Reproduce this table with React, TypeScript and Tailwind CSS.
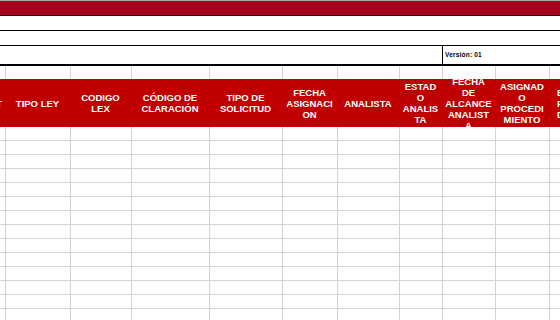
const cols = [
  { w: "w-[5px]", lines: ["NIT"] },
  { w: "w-[65px]", lines: ["TIPO LEY"] },
  { w: "w-[61px]", lines: ["CODIGO", "LEX"] },
  { w: "w-[78px]", lines: ["CÓDIGO DE", "CLARACIÓN"] },
  { w: "w-[73px]", lines: ["TIPO DE", "SOLICITUD"] },
  { w: "w-[55px]", lines: ["FECHA", "ASIGNACI", "ON"] },
  { w: "w-[62px]", lines: ["ANALISTA"] },
  { w: "w-[43px]", lines: ["ESTAD", "O", "ANALIS", "TA"] },
  { w: "w-[53px]", lines: ["FECHA", "DE", "ALCANCE", "ANALIST", "A"] },
  { w: "w-[54px]", lines: ["ASIGNAD", "O", "PROCEDI", "MIENTO"] },
  { w: "w-[60px]", lines: ["ESTADO", "PROCE", "DIMIENTO"] },
];

const rows = Array.from({ length: 14 }, (_, i) => i);

function GridRow({ h }: { h: string }) {
  return (
    <div className={`flex ${h} shrink-0 border-b border-[#d4d4d4]`}>
      {cols.map((c, i) => (
        <div
          key={i}
          className={`${c.w} shrink-0 ${i > 0 ? "border-l border-[#d4d4d4]" : ""}`}
        />
      ))}
    </div>
  );
}

export default function App() {
  return (
    <div className="w-[560px] h-[320px] overflow-hidden bg-white flex flex-col font-['Liberation_Sans',Arial,sans-serif]">
      <div className="h-[1px] shrink-0 bg-[#a6a6a6]" />
      <div className="h-[14px] shrink-0 bg-[#a50021]" />
      <div className="h-[15px] shrink-0 border-t border-black" />
      <div className="h-[15px] shrink-0 border-t border-black" />
      <div className="h-[19px] shrink-0 border-t border-black flex">
        <div className="w-[442px] shrink-0" />
        <div className="flex-1 border-l border-black flex items-center pl-[2px] text-[6.5px] font-bold text-black tracking-[0.2px]">
          Versión: 01
        </div>
      </div>
      <div className="h-[2px] shrink-0 bg-black" />

      {/* top spacer row with gridlines */}
      <div className="flex h-[13px] shrink-0">
        {cols.map((c, i) => (
          <div
            key={i}
            className={`${c.w} shrink-0 ${i > 0 ? "border-l border-[#d4d4d4]" : ""}`}
          />
        ))}
      </div>

      {/* header */}
      <div className="flex h-[48px] shrink-0 bg-[#c00000] overflow-hidden">
        {cols.map((c, i) => (
          <div
            key={i}
            className={`${c.w} shrink-0 h-full overflow-hidden flex flex-col ${
              i === 0 ? "items-end pr-[3px]" : i === cols.length - 1 ? "items-start pl-[8px]" : "items-center"
            } justify-center text-white font-bold text-[9.5px] leading-[11px] text-center whitespace-nowrap`}
          >
            {c.lines.map((l, j) => (
              <span key={j} className="block shrink-0">
                {l}
              </span>
            ))}
          </div>
        ))}
      </div>

      {rows.map((r) => (
        <GridRow key={r} h="h-[14px]" />
      ))}
    </div>
  );
}
